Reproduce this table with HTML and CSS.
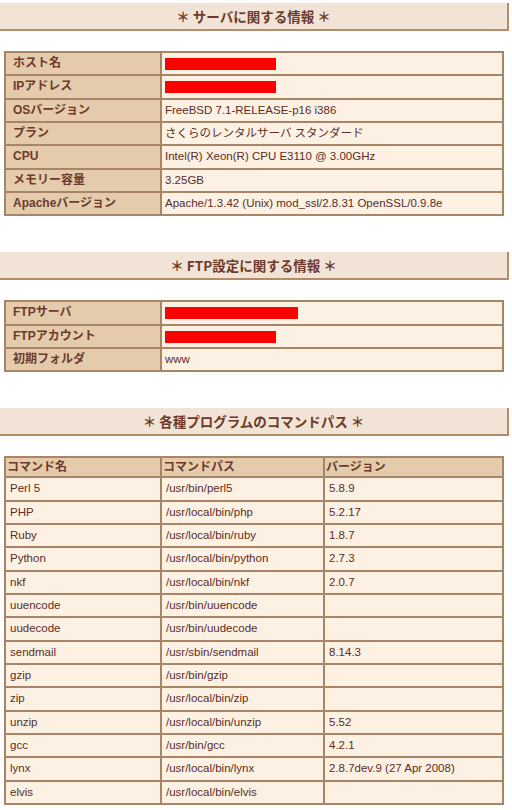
FILE: index.html
```html
<!DOCTYPE html>
<html lang="ja">
<head>
<meta charset="utf-8">
<title>サーバ情報</title>
<link rel="stylesheet" href="styles.css">
</head>
<body>
<h2 class="sec-title">＊ サーバに関する情報 ＊</h2>
<table class="info">
  <colgroup><col class="c-label"><col class="c-value"></colgroup>
  <tr><th>ホスト名</th><td><span class="mask mask-a"></span></td></tr>
  <tr><th>IPアドレス</th><td><span class="mask mask-a"></span></td></tr>
  <tr><th>OSバージョン</th><td>FreeBSD 7.1-RELEASE-p16 i386</td></tr>
  <tr><th>プラン</th><td>さくらのレンタルサーバ スタンダード</td></tr>
  <tr><th>CPU</th><td>Intel(R) Xeon(R) CPU E3110 @ 3.00GHz</td></tr>
  <tr><th>メモリー容量</th><td>3.25GB</td></tr>
  <tr><th>Apacheバージョン</th><td>Apache/1.3.42 (Unix) mod_ssl/2.8.31 OpenSSL/0.9.8e</td></tr>
</table>

<h2 class="sec-title">＊ FTP設定に関する情報 ＊</h2>
<table class="info">
  <colgroup><col class="c-label"><col class="c-value"></colgroup>
  <tr><th>FTPサーバ</th><td><span class="mask mask-b"></span></td></tr>
  <tr><th>FTPアカウント</th><td><span class="mask mask-a"></span></td></tr>
  <tr><th>初期フォルダ</th><td>www</td></tr>
</table>

<h2 class="sec-title">＊ 各種プログラムのコマンドパス ＊</h2>
<table class="info cmd">
  <colgroup><col class="c-name"><col class="c-path"><col class="c-ver"></colgroup>
  <tr class="head"><th>コマンド名</th><th>コマンドパス</th><th>バージョン</th></tr>
  <tr><td>Perl 5</td><td>/usr/bin/perl5</td><td>5.8.9</td></tr>
  <tr><td>PHP</td><td>/usr/local/bin/php</td><td>5.2.17</td></tr>
  <tr><td>Ruby</td><td>/usr/local/bin/ruby</td><td>1.8.7</td></tr>
  <tr><td>Python</td><td>/usr/local/bin/python</td><td>2.7.3</td></tr>
  <tr><td>nkf</td><td>/usr/local/bin/nkf</td><td>2.0.7</td></tr>
  <tr><td>uuencode</td><td>/usr/bin/uuencode</td><td></td></tr>
  <tr><td>uudecode</td><td>/usr/bin/uudecode</td><td></td></tr>
  <tr><td>sendmail</td><td>/usr/sbin/sendmail</td><td>8.14.3</td></tr>
  <tr><td>gzip</td><td>/usr/bin/gzip</td><td></td></tr>
  <tr><td>zip</td><td>/usr/local/bin/zip</td><td></td></tr>
  <tr><td>unzip</td><td>/usr/local/bin/unzip</td><td>5.52</td></tr>
  <tr><td>gcc</td><td>/usr/bin/gcc</td><td>4.2.1</td></tr>
  <tr><td>lynx</td><td>/usr/local/bin/lynx</td><td>2.8.7dev.9 (27 Apr 2008)</td></tr>
  <tr><td>elvis</td><td>/usr/local/bin/elvis</td><td></td></tr>
</table>
</body>
</html>
```

FILE: styles.css
```css
html, body {
  margin: 0;
  padding: 0;
  background: #ffffff;
}
body {
  font-family: "Liberation Sans", "Noto Sans CJK JP", sans-serif;
  font-size: 12px;
  color: #5a2d1f;
  padding-top: 3px;
}
.sec-title {
  margin: 0 0 20px 0;
  width: 507px;
  height: 26px;
  line-height: 26px;
  background: #f1e4d6;
  border-right: 2px solid #b08b6c;
  border-bottom: 2px solid #b08b6c;
  text-align: center;
  font-size: 13.5px;
  font-weight: bold;
  color: #6e3a2c;
  font-family: "Noto Sans CJK JP", sans-serif;
}
.info {
  margin: 0 0 36px 4px;
  width: 500px;
  table-layout: fixed;
  border-collapse: separate;
  border-spacing: 0;
  border: 1px solid #a98567;
}
.info th, .info td {
  box-sizing: border-box;
  border: 1px solid #a98567;
  padding: 3px 3px;
  line-height: 15.33px;
  text-align: left;
  vertical-align: middle;
  white-space: nowrap;
  overflow: hidden;
}
.info th {
  background: #e3cbab;
  color: #6e3a2c;
  font-weight: bold;
  padding-left: 7px;
}
.info td {
  background: #fdf1e3;
  font-weight: normal;
  font-size: 11.5px;
}
.c-label { width: 156px; }
.c-value { width: 342px; }
.c-name { width: 156px; }
.c-path { width: 163px; }
.c-ver { width: 179px; }
.cmd td { padding-left: 4px; }
.cmd .head th {
  padding: 2px 1px;
  line-height: 14px;
}
.mask {
  display: inline-block;
  height: 12px;
  background: #ff0000;
  vertical-align: middle;
}
.mask-a { width: 111px; }
.mask-b { width: 133px; }
```
